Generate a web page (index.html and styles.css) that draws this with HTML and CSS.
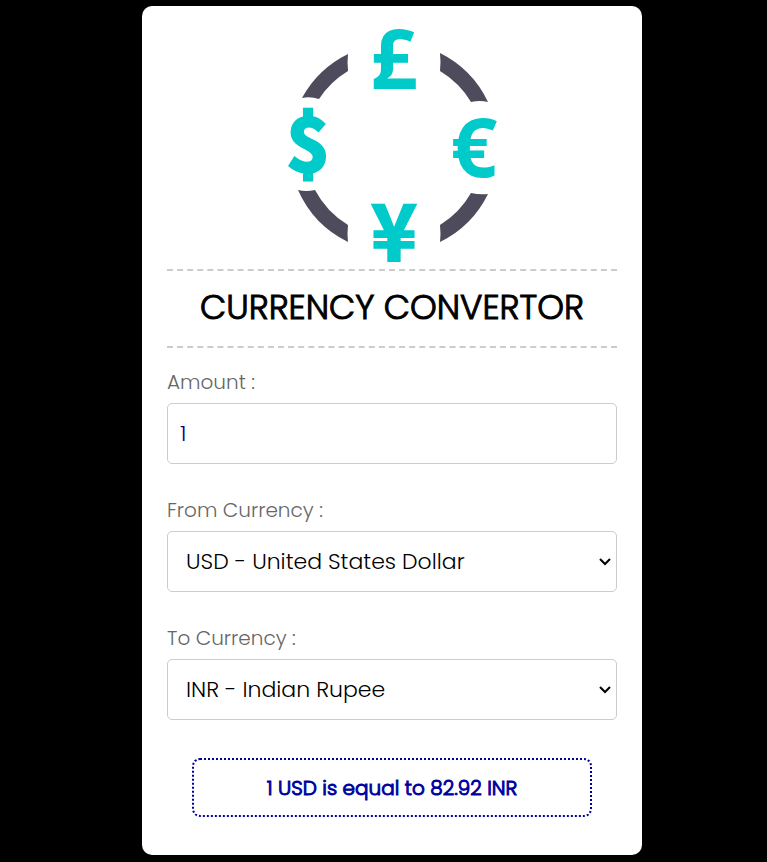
FILE: index.html
```html
<!DOCTYPE html>
<html lang="en">
<head>
  <meta charset="utf-8">
  <meta name="viewport" content="width=device-width, initial-scale=1">
  <title>Currency Convertor</title>
  <link rel="stylesheet" href="styles.css">
</head>
<body>
  <main class="card">
    <svg class="logo" viewBox="-127 -132 250 253" role="img" aria-label="Currencies">
      <g class="ring">
        <path d="M-46-94A105 105 0 0 0-92-50Q-84-52-75-49A90 90 0 0 1-46-77Q-47-86-46-94Z"/>
        <path d="M46-95A105 105 0 0 1 94-46Q86-48 77-46A90 90 0 0 0 46-77Q47-86 46-95Z"/>
        <path d="M-96 42A105 105 0 0 0-46 94Q-47 86-46 77A90 90 0 0 1-79 42Q-88 44-96 42Z"/>
        <path d="M94 46A105 105 0 0 1 46 94Q47 86 46 77A90 90 0 0 0 77 45Q86 47 94 46Z"/>
      </g>
      <g class="symbols">
        <text x="0" y="-59">£</text>
        <text x="80" y="29">€</text>
        <text class="yen" x="0" y="113">¥</text>
        <text class="dollar" x="-86" y="23">$</text>
      </g>
    </svg>
    <h1 class="title">CURRENCY CONVERTOR</h1>
    <form class="form">
      <div class="field">
        <label for="amount">Amount :</label>
        <input id="amount" class="control amount" type="text" inputmode="decimal" value="1">
      </div>
      <div class="field">
        <label for="from">From Currency :</label>
        <select id="from" class="control select">
          <option>USD - United States Dollar</option>
          <option>INR - Indian Rupee</option>
        </select>
      </div>
      <div class="field">
        <label for="to">To Currency :</label>
        <select id="to" class="control select">
          <option>INR - Indian Rupee</option>
          <option>USD - United States Dollar</option>
        </select>
      </div>
      <output class="result" for="amount from to">1 USD is equal to 82.92 INR</output>
    </form>
  </main>
</body>
</html>
```
FILE: styles.css
```css
* {
  box-sizing: border-box;
}

body {
  margin: 0;
  padding: 6px 0 7px 17px;
  background: #000;
  font-family: Poppins, Inter, sans-serif;
  font-weight: 300;
}

.card {
  max-width: 500px;
  margin: 0 auto;
  padding: 10px 25px 38px;
  background: #fff;
  border-radius: 10px;
}

.logo {
  display: block;
  width: 250px;
  max-width: 100%;
  margin: 0 auto;
  overflow: visible;
}

.ring {
  fill: #4d4b5c;
}

.symbols {
  fill: #00caca;
  font-family: "Open Sans", "Noto Sans", sans-serif;
  font-size: 82px;
  font-weight: 700;
  text-anchor: middle;
}

.symbols .yen,
.symbols .dollar {
  font-family: "Noto Sans CJK SC", sans-serif;
  stroke: #00caca;
  stroke-width: 2px;
}

.symbols .yen {
  font-size: 78px;
}

.symbols .dollar {
  font-size: 73px;
  stroke-width: 3px;
}

.title {
  margin: 0 0 19px;
  padding: 12px 0 14px;
  border: 2px dashed #ccc;
  border-width: 2px 0;
  font-size: 34px;
  font-weight: 300;
  line-height: 49px;
  text-align: center;
  -webkit-text-stroke: 1px currentColor;
}

.form {
  display: flex;
  flex-direction: column;
  gap: 31px;
}

.field {
  display: flex;
  flex-direction: column;
  gap: 6px;
}

.field label {
  color: #666;
  font-size: 20px;
  line-height: 30px;
}

.control {
  width: 100%;
  height: 61px;
  border: 1px solid #ccc;
  border-radius: 5px;
  background-color: #fff;
  color: #000;
  font-family: inherit;
  font-size: 22px;
  font-weight: 300;
}

.amount {
  padding: 0 12px;
  color: #00008b;
}

.select {
  appearance: none;
  padding: 0 30px 0 18px;
  background-image: url("data:image/svg+xml,%3Csvg xmlns='http://www.w3.org/2000/svg' width='12' height='8'%3E%3Cpath d='M1 1L6 6L11 1' fill='none' stroke='%23000' stroke-width='2'/%3E%3C/svg%3E");
  background-repeat: no-repeat;
  background-position: right 5px center;
}

.result {
  margin: 7px 25px 0;
  padding: 13px 10px 12px;
  border: 2px dotted #0000a0;
  border-radius: 8px;
  color: #0000a0;
  font-size: 20px;
  font-weight: 300;
  line-height: 30px;
  text-align: center;
  -webkit-text-stroke: 1px currentColor;
}
```
